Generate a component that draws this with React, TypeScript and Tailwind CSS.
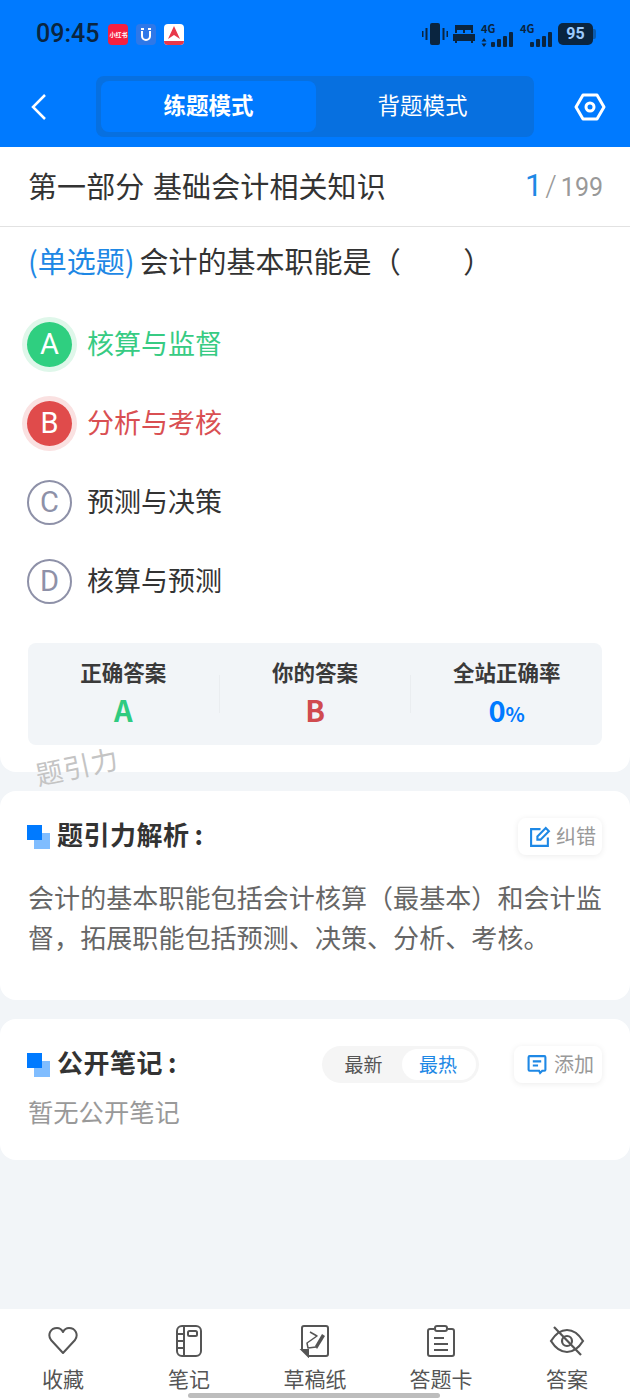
const cjk = "font-['Noto_Sans_CJK_SC','Noto_Sans',sans-serif]";

const Heading = ({ text }: { text: string }) => (
  <div className="flex items-center gap-[7px]">
    <div className="relative w-[23px] h-[24px] -ml-px">
      <div className="absolute right-0 bottom-0 w-[16px] h-[16px] bg-[#80BDFF]" />
      <div className="absolute left-0 top-0 w-[15px] h-[15px] bg-[#007AFF]" />
    </div>
    <span className="text-[26px] leading-[32px] font-bold text-[#333] tracking-[0.5px] -mt-[5px]">
      {text}
      <span className="ml-[5px]">:</span>
    </span>
  </div>
);

const Option = ({ letter, text, state }: { letter: string; text: string; state?: "right" | "wrong" }) => {
  let circle = "border-[2px] border-[#8E91A8] text-[#8E91A8] bg-white";
  let label = "text-[#333]";
  if (state === "right") {
    circle = "bg-[#2FCF80] text-white ring-[5px] ring-[#DFF7EA]";
    label = "text-[#37CB83]";
  }
  if (state === "wrong") {
    circle = "bg-[#E04B4B] text-white ring-[5px] ring-[#FAE1E1]";
    label = "text-[#D94F52]";
  }
  return (
    <div className="flex items-center h-[79px] gap-[15px]">
      <div className={`w-[45px] h-[45px] rounded-full flex items-center justify-center text-[29px] font-['Roboto',sans-serif] ${circle}`}>
        {letter}
      </div>
      <span className={`text-[27px] leading-[36px] -mt-[3px] ${label}`}>{text}</span>
    </div>
  );
};

const Stat = ({ title, children }: { title: string; children: React.ReactNode }) => (
  <div className="flex-1 flex flex-col items-center">
    <span className="text-[21.5px] leading-[30px] font-bold text-[#3A3A3A] mt-[14px] mb-[3px]">{title}</span>
    {children}
  </div>
);

const Heart = () => (
  <svg width="32" height="32" viewBox="0 0 32 32" fill="none" stroke="#555" strokeWidth="2">
    <path d="M16 28 L4 15 C0 9 4 3 10 3 C13 3 15 5 16 7 C17 5 19 3 22 3 C28 3 32 9 28 15 Z" strokeLinejoin="round" />
  </svg>
);

const Notebook = () => (
  <svg width="30" height="34" viewBox="0 0 30 34" fill="none" stroke="#555" strokeWidth="2">
    <rect x="3" y="2" width="24" height="30" rx="5" />
    <path d="M10 2V32M3 10h7M3 17h7M3 24h7" />
    <rect x="14" y="7" width="9" height="5" rx="1.5" />
  </svg>
);

const Draft = () => (
  <svg width="32" height="34" viewBox="0 0 32 34" fill="none" stroke="#555" strokeWidth="2">
    <path d="M9 32H27a2 2 0 0 0 2-2V4a2 2 0 0 0-2-2H5a2 2 0 0 0-2 2V26" />
    <path d="M3 26h6v6Z" fill="#555" />
    <path d="M11 8 L18 12 L8 19 L9 24 L17 23" strokeWidth="1.500" strokeLinejoin="round" />
    <path d="M18 25 L26 12 L23 10 L16 22 Z" fill="#555" stroke="none" />
  </svg>
);

const Sheet = () => (
  <svg width="32" height="34" viewBox="0 0 32 34" fill="none" stroke="#555" strokeWidth="2">
    <path d="M9 5H5a2 2 0 0 0-2 2v23a2 2 0 0 0 2 2h22a2 2 0 0 0 2-2V7a2 2 0 0 0-2-2h-4" />
    <rect x="10" y="2" width="12" height="5" rx="2" />
    <path d="M9 14h10M9 20h14M9 26h14" />
  </svg>
);

const EyeOff = () => (
  <svg width="36" height="32" viewBox="0 0 36 32" fill="none" stroke="#555" strokeWidth="2.200">
    <path d="M2 16 C7 8 12 5 18 5 C24 5 29 8 34 16 C29 24 24 27 18 27 C12 27 7 24 2 16 Z" />
    <circle cx="18" cy="16" r="5" />
    <path d="M5 2 L32 30" />
  </svg>
);

const TabItem = ({ icon, label }: { icon: React.ReactNode; label: string }) => (
  <div className="flex-1 flex flex-col items-center">
    <div className="h-[34px] flex items-center justify-center">{icon}</div>
    <span className="text-[21px] leading-[28px] text-[#555] mt-[6px]">{label}</span>
  </div>
);

const Signal = ({ arrows }: { arrows?: boolean }) => (
  <div className="relative w-[32px] h-[25px]">
    <span className="absolute left-0 top-0 text-[11px] leading-[12px] font-bold">4G</span>
    <div className="absolute left-0 right-0 bottom-0 flex items-end justify-between">
      {arrows ? (
        <svg width="6" height="9" viewBox="0 0 5 9" fill="#0A2540">
          <path d="M2.500 0 L5 3.500 H0 Z M0 5.500 H5 L2.500 9 Z" />
        </svg>
      ) : (
        <div />
      )}
      <div className="flex items-end gap-[2px]">
        <div className="w-[4px] h-[5px] rounded-[1px] bg-[#0A2540]" />
        <div className="w-[4px] h-[8px] rounded-[1px] bg-[#0A2540]" />
        <div className="w-[4px] h-[11px] rounded-[1px] bg-[#0A2540]" />
        <div className="w-[4px] h-[15px] rounded-[1px] bg-[#0A2540]" />
      </div>
    </div>
  </div>
);

const App = () => {
  return (
    <div className={`relative w-[630px] h-[1400px] overflow-hidden bg-[#F2F5F8] flex flex-col ${cjk}`}>
      {/* header */}
      <div className="bg-[#007AFF] h-[147px] shrink-0">
        <div className="h-[76px] flex items-center pl-[36px] pr-[34px] pb-[8px]">
          <span className="text-[25px] font-['Roboto',sans-serif] text-[#0A2540] font-medium">09:45</span>
          <div className="flex gap-[8px] ml-[9px]">
            <div className="w-[20px] h-[21px] rounded-[4px] bg-[#F5203F] flex items-center justify-center text-[6px] whitespace-nowrap text-white font-bold">小红书</div>
            <div className="w-[20px] h-[21px] rounded-[4px] bg-[#2E78E8]">
              <svg width="20" height="21" viewBox="0 0 20 21" fill="none" stroke="#fff" strokeWidth="2">
                <path d="M6 7V12a4 4 0 0 0 8 0V7M5 5H8M12 5H15" />
              </svg>
            </div>
            <div className="w-[20px] h-[21px] rounded-[4px] bg-white overflow-hidden">
              <svg width="20" height="21" viewBox="0 0 20 21"><path d="M4 15 L10 2 L16 15 L10 11 Z" fill="#E8384A" /><rect x="0" y="17" width="20" height="4" fill="#E8384A" /></svg>
            </div>
          </div>
          <div className="ml-auto flex items-center text-[#0A2540]">
            <svg width="26" height="24" viewBox="0 0 26 24" fill="#0A2540">
              <rect x="8" y="1" width="10" height="22" rx="2" />
              <rect x="3.500" y="6" width="2" height="12" />
              <rect x="20.500" y="6" width="2" height="12" />
              <rect x="0" y="9" width="1.500" height="6" />
              <rect x="24.500" y="9" width="1.500" height="6" />
            </svg>
            <svg width="24" height="20" viewBox="0 0 24 20" fill="#0A2540" className="ml-[4px]">
              <path d="M3 1h18v8h-2V6h-6v3h-2V6H5v3H3Z" />
              <path d="M1 10h22v7h-2v2h-2v-2H5v2H3v-2H1Z" />
            </svg>
            <div className="ml-[5px]"><Signal arrows /></div>
            <div className="ml-[7px]"><Signal /></div>
            <div className="w-[35px] h-[22px] rounded-[5px] bg-[#0A2540] ml-[6px] flex items-center justify-center text-[16px] font-['Roboto',sans-serif] font-bold text-[#9CCBFF]">95</div>
            <div className="w-[3px] h-[10px] bg-[#0A5BB0] rounded-r-[2px]" />
          </div>
        </div>
        <div className="flex items-center h-[61px]">
          <div className="w-[96px] pl-[30px]">
            <svg width="20" height="30" viewBox="0 0 20 30" fill="none" stroke="#fff" strokeWidth="2.500"><path d="M15 3 L3 15 L15 27" /></svg>
          </div>
          <div className="w-[438px] h-[61px] bg-[#0770E0] rounded-[8px] p-[5px] flex">
            <div className="w-[215px] bg-[#007AFF] rounded-[8px] flex items-center justify-center text-[22.500px] font-bold text-white pb-[3px]">练题模式</div>
            <div className="flex-1 flex items-center justify-center text-[22.500px] text-white pb-[3px]">背题模式</div>
          </div>
          <div className="flex-1 flex justify-center pl-[15px]">
            <svg width="32" height="28" viewBox="0 0 32 28" fill="none" stroke="#fff" strokeWidth="3">
              <path d="M9 2 H23 L30 14 L23 26 H9 L2 14 Z" strokeLinejoin="round" />
              <circle cx="16" cy="14" r="4" />
            </svg>
          </div>
        </div>
      </div>

      {/* first card */}
      <div className="bg-white rounded-b-[16px] h-[625px] shrink-0">
        <div className="h-[80px] border-b border-[#E2E2E2] flex items-center justify-between pl-[28px] pr-[27px]">
          <span className="text-[29px] leading-[40px] text-[#333] -mt-[3px] [word-spacing:2px] tracking-[0.1px]">第一部分 基础会计相关知识</span>
          <div className="flex items-baseline font-['Roboto',sans-serif] text-[#999] text-[25px]">
            <span className="text-[31px] text-[#1E88E5] mr-[3px]">1</span>
            <span className="mr-[4px] text-[29px] font-light">/</span>
            <span>199</span>
          </div>
        </div>
        <div className="pl-[28px] text-[29px] leading-[40px] text-[#333] mt-[13px]">
          <span className="text-[#1E88E5] mr-[5px]">(单选题)</span>
          会计的基本职能是<span className="tracking-[1.500px]">（　　</span>）
        </div>
        <div className="mt-[25px] pl-[27px]">
          <Option letter="A" text="核算与监督" state="right" />
          <Option letter="B" text="分析与考核" state="wrong" />
          <Option letter="C" text="预测与决策" />
          <Option letter="D" text="核算与预测" />
        </div>
        <div className="mx-[28px] mt-[22px] h-[102px] bg-[#F2F5F8] rounded-[8px] flex">
          <Stat title="正确答案">
            <span className="text-[29px] leading-[38px] font-bold text-[#2FCB80]">A</span>
          </Stat>
          <div className="w-px h-[38px] bg-[#EAEDF0] mt-[32px]" />
          <Stat title="你的答案">
            <span className="text-[29px] leading-[38px] font-bold text-[#D04B4F]">B</span>
          </Stat>
          <div className="w-px h-[38px] bg-[#EAEDF0] mt-[32px]" />
          <Stat title="全站正确率">
            <span className="text-[29px] leading-[38px] font-bold text-[#007AFF]">
              0<span className="text-[20px]">%</span>
            </span>
          </Stat>
        </div>
      </div>

      {/* analysis */}
      <div className="bg-white rounded-[16px] mt-[19px] h-[209px] shrink-0 px-[28px] pt-[27px]">
        <div className="flex items-center justify-between">
          <Heading text="题引力解析" />
          <div className="flex items-center gap-[5px] w-[84px] h-[37px] rounded-[8px] bg-white shadow-[0_1px_6px_rgba(0,0,0,0.08)] pl-[11px]">
            <svg width="22" height="22" viewBox="0 0 21 21" fill="none" stroke="#1E88E5" strokeWidth="2">
              <path d="M11 3H2v16h16v-8" />
              <path d="M8 10 L16 2 L19 5 L11 13 L8 13 Z" />
            </svg>
            <span className="text-[20px] text-[#999] -mt-[2px]">纠错</span>
          </div>
        </div>
        <p className="mt-[22px] text-[26px] tracking-[0.08px] leading-[40px] text-[#666]">
          会计的基本职能包括会计核算（最基本）和会计监督，拓展职能包括预测、决策、分析、考核。
        </p>
      </div>

      {/* notes */}
      <div className="bg-white rounded-[16px] mt-[19px] h-[141px] shrink-0 px-[28px] pt-[27px]">
        <div className="flex items-center">
          <Heading text="公开笔记" />
          <div className="ml-auto flex items-center w-[157px] h-[37px] rounded-full bg-[#F5F5F5] p-[3px]">
            <span className="w-[77px] text-center text-[19px] text-[#555]">最新</span>
            <span className="flex-1 h-full rounded-full bg-white flex items-center justify-center pr-[2px] text-[19px] text-[#1E88E5]">最热</span>
          </div>
          <div className="ml-[35px] flex items-center gap-[6px] w-[88px] h-[37px] rounded-[8px] bg-white shadow-[0_1px_6px_rgba(0,0,0,0.08)] pl-[12px]">
            <svg width="22" height="21" viewBox="0 0 20 20" fill="none" stroke="#1E88E5" strokeWidth="2">
              <path d="M3 2h14a1 1 0 0 1 1 1v12a1 1 0 0 1-1 1h-2l-2 2-1-2H3a1 1 0 0 1-1-1V3a1 1 0 0 1 1-1Z" />
              <path d="M6 7h8M6 11h5" />
            </svg>
            <span className="text-[20px] text-[#999] -mt-[2px]">添加</span>
          </div>
        </div>
        <p className="mt-[10px] text-[25.300px] leading-[36px] text-[#999]">暂无公开笔记</p>
      </div>

      {/* bottom bar */}
      <div className="mt-auto bg-white h-[91px] shrink-0 flex pt-[15px] relative">
        <TabItem icon={<Heart />} label="收藏" />
        <TabItem icon={<Notebook />} label="笔记" />
        <TabItem icon={<Draft />} label="草稿纸" />
        <TabItem icon={<Sheet />} label="答题卡" />
        <TabItem icon={<EyeOff />} label="答案" />
        <div className="absolute left-[188px] bottom-[2px] w-[252px] h-[5px] rounded-full bg-[#BDBDBD]" />
      </div>

      {/* watermark */}
      <div className="absolute left-[35px] top-[748px] -rotate-[12deg] text-[27px] leading-[36px] text-[#C4C4C4] tracking-[1px]">题引力</div>
    </div>
  );
};

export default App;
